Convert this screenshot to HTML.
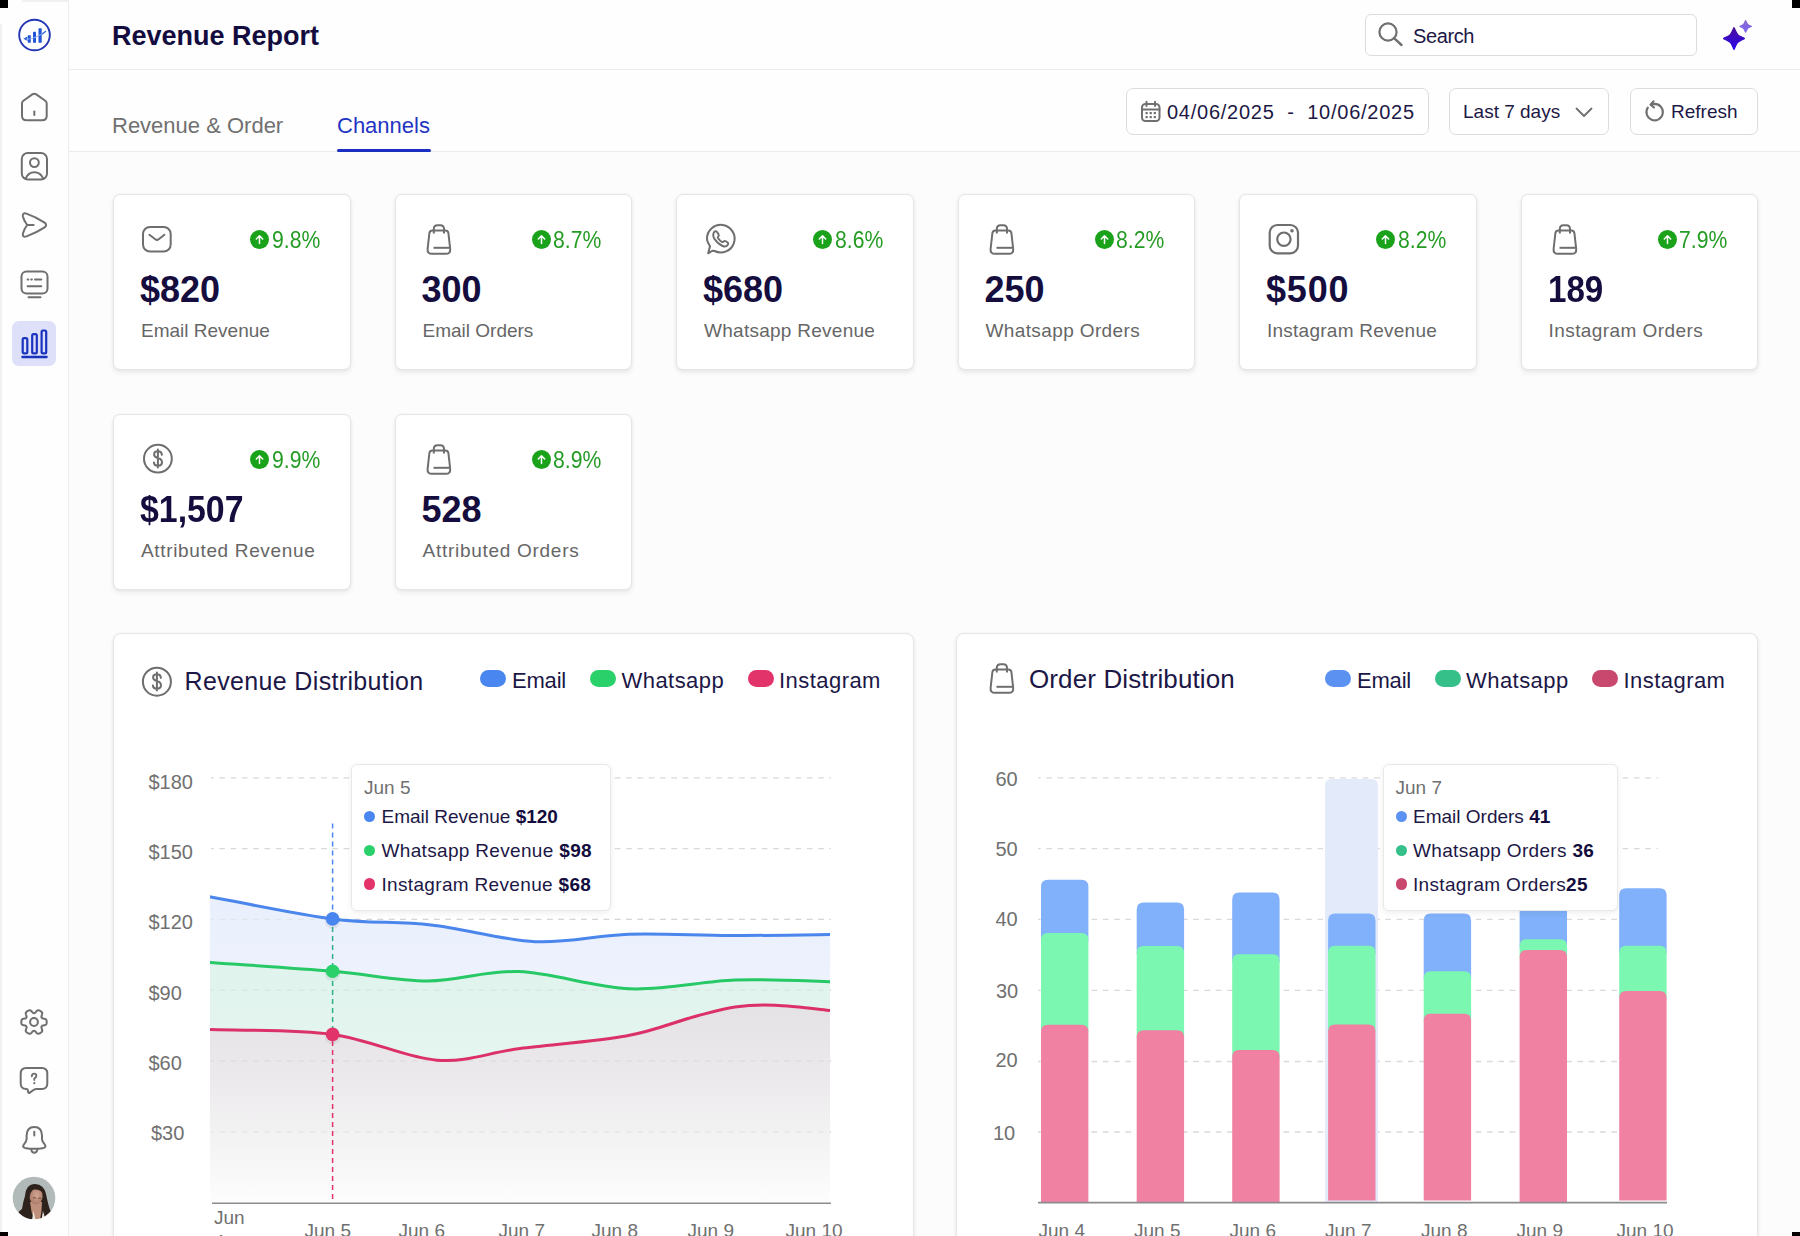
<!DOCTYPE html>
<html><head><meta charset="utf-8">
<style>
*{box-sizing:border-box;margin:0;padding:0}
html,body{width:1800px;height:1236px;overflow:hidden;background:#fcfcfc;font-family:"Liberation Sans",sans-serif;color:#15103f}
.abs{position:absolute}
.t{position:absolute;white-space:nowrap;line-height:1}
#side{position:absolute;left:0;top:0;width:69px;height:1236px;background:#fefefe;border-right:1px solid #ededed}
#head{position:absolute;left:69px;top:0;width:1731px;height:70px;background:#fefefe;border-bottom:1px solid #ebebeb}
#tabs{position:absolute;left:69px;top:70px;width:1731px;height:82px;background:#fefefe;border-bottom:1px solid #ebebeb}
.btn{position:absolute;border:1px solid #dcdcdc;border-radius:7px;background:#fff}
.card{position:absolute;background:#fff;border:1px solid #e6e6e6;border-radius:7px;box-shadow:0 0 3px rgba(0,0,0,0.05),0 3px 5px rgba(0,0,0,0.07)}
.corner{position:absolute;background:#000;width:8px}
.ico{position:absolute;overflow:visible}
.kv{font-size:36px;font-weight:700;color:#140d3e}
.kl{font-size:19px;color:#666}
.kp{font-size:23.5px;transform:scaleX(0.9);transform-origin:0 0;color:#249c24}
.badge{position:absolute;width:19px;height:19px;border-radius:50%;background:#1aa31a}
</style></head>
<body>
<div id="side"></div>
<div id="head"></div>
<div id="tabs"></div>



<!-- sidebar -->
<div class="abs" style="left:0;top:24px;width:1.5px;height:1212px;background:#f1f1f1"></div>
<div class="abs" style="left:22px;top:0;width:47px;height:1.5px;background:#f1f1f1"></div>
<svg class="ico" style="left:18px;top:18px" width="34" height="34" viewBox="0 0 34 34">
 <circle cx="16.5" cy="17" r="15.3" fill="#fff" stroke="#2336b4" stroke-width="1.9"/>
 <g fill="#1f55d6"><rect x="9.8" y="17.2" width="3" height="7.6" rx="0.5"/><rect x="15" y="13.8" width="3" height="11" rx="0.5"/><rect x="20.5" y="10.3" width="3.2" height="14.5" rx="0.5"/></g>
 <path d="M5.3 20.8 L9.6 18.6 L9.2 21 L9.8 23 Z" fill="#2a5ed8"/>
 <path d="M9 21.2 Q17 21 27.6 13.4" fill="none" stroke="#8fb2f2" stroke-width="1.1" stroke-linecap="round"/>
 <path d="M23.9 16.2 L27.6 13.4" fill="none" stroke="#3a6ad8" stroke-width="1.2" stroke-linecap="round"/>
</svg>
<svg class="ico" style="left:20px;top:92px" width="29" height="30" viewBox="0 0 29 30">
 <path d="M2 11.5 Q2 9.8 3.4 8.8 L12.3 2.4 Q14.3 1 16.3 2.4 L25.3 8.8 Q26.7 9.8 26.7 11.5 V23.7 Q26.7 28.3 22.1 28.3 H6.6 Q2 28.3 2 23.7Z" fill="none" stroke="#6f6f6f" stroke-width="2" stroke-linejoin="round"/>
 <path d="M14.3 19.5 V23" stroke="#6f6f6f" stroke-width="2" stroke-linecap="round"/>
</svg>
<svg class="ico" style="left:20px;top:151px" width="29" height="30" viewBox="0 0 29 30">
 <rect x="1.8" y="2" width="25.2" height="26.5" rx="6" fill="none" stroke="#6f6f6f" stroke-width="2"/>
 <circle cx="14.4" cy="11.6" r="4.4" fill="none" stroke="#6f6f6f" stroke-width="2"/>
 <path d="M5.6 27.6 Q8.2 21.2 14.4 21.2 Q20.6 21.2 23.2 27.6" fill="none" stroke="#6f6f6f" stroke-width="2"/>
</svg>
<svg class="ico" style="left:20px;top:211px" width="29" height="29" viewBox="0 0 29 29">
 <path d="M6.5 2.6 Q2.2 1.4 2.9 5.4 Q4 10 7.2 14 Q4 18 2.9 22.6 Q2.2 26.6 6.5 25.4 Q16 22 24.6 16.4 Q27.6 14 24.6 11.6 Q16 6 6.5 2.6Z" fill="none" stroke="#6f6f6f" stroke-width="2" stroke-linejoin="round"/>
 <path d="M7.4 14 H13.6" stroke="#6f6f6f" stroke-width="2" stroke-linecap="round"/>
</svg>
<svg class="ico" style="left:19px;top:269px" width="31" height="31" viewBox="0 0 31 31">
 <rect x="2.5" y="2.6" width="26" height="21.8" rx="5" fill="none" stroke="#6f6f6f" stroke-width="2"/>
 <path d="M8.6 10.5 H9.3 M12.2 10.5 H12.9 M16 10.5 H22.3 M8.6 17.2 H22.3 M9.5 28.3 H21.5" stroke="#6f6f6f" stroke-width="2" stroke-linecap="round"/>
</svg>
<div class="abs" style="left:12px;top:321px;width:44px;height:45px;border-radius:7px;background:#dde0f8"></div>
<svg class="ico" style="left:20px;top:328px" width="29" height="31" viewBox="0 0 29 31">
 <rect x="2.7" y="10.2" width="4.6" height="15.2" rx="1.4" fill="none" stroke="#1a33bf" stroke-width="2.2"/>
 <rect x="12.2" y="6.2" width="4.6" height="19.2" rx="1.4" fill="none" stroke="#1a33bf" stroke-width="2.2"/>
 <rect x="21.6" y="2.5" width="4.6" height="22.9" rx="1.4" fill="none" stroke="#1a33bf" stroke-width="2.2"/>
 <path d="M2.5 29 H26.5" stroke="#1a33bf" stroke-width="2.5" stroke-linecap="round"/>
</svg>
<svg class="ico" style="left:19.2px;top:1006.9px" width="30" height="30" viewBox="0 0 30 30">
 <path d="M27.70 15.00 L27.70 15.22 L27.69 15.44 L27.67 15.66 L27.65 15.88 L27.62 16.10 L27.58 16.32 L27.53 16.54 L27.47 16.75 L27.39 16.96 L27.29 17.17 L27.17 17.37 L27.01 17.55 L26.81 17.73 L26.56 17.88 L26.27 18.02 L25.92 18.13 L25.55 18.22 L25.16 18.30 L24.77 18.36 L24.40 18.42 L24.08 18.48 L23.79 18.55 L23.55 18.63 L23.35 18.72 L23.18 18.81 L23.03 18.92 L22.91 19.03 L22.80 19.15 L22.70 19.27 L22.62 19.40 L22.55 19.54 L22.49 19.68 L22.44 19.83 L22.41 20.00 L22.39 20.17 L22.39 20.37 L22.42 20.59 L22.47 20.84 L22.56 21.12 L22.67 21.43 L22.80 21.78 L22.94 22.14 L23.07 22.52 L23.17 22.89 L23.25 23.25 L23.28 23.57 L23.26 23.86 L23.21 24.12 L23.13 24.35 L23.02 24.56 L22.90 24.75 L22.75 24.92 L22.60 25.08 L22.44 25.24 L22.27 25.38 L22.09 25.51 L21.91 25.64 L21.73 25.77 L21.54 25.89 L21.35 26.00 L21.16 26.11 L20.96 26.21 L20.76 26.31 L20.56 26.40 L20.35 26.48 L20.15 26.56 L19.93 26.62 L19.72 26.68 L19.50 26.71 L19.27 26.73 L19.04 26.72 L18.79 26.68 L18.54 26.59 L18.28 26.45 L18.02 26.27 L17.75 26.03 L17.48 25.75 L17.22 25.44 L16.97 25.14 L16.74 24.86 L16.52 24.60 L16.32 24.39 L16.13 24.22 L15.96 24.09 L15.79 23.99 L15.62 23.91 L15.46 23.86 L15.31 23.83 L15.15 23.81 L15.00 23.80 L14.85 23.81 L14.69 23.83 L14.54 23.86 L14.38 23.91 L14.21 23.99 L14.04 24.09 L13.87 24.22 L13.68 24.39 L13.48 24.60 L13.26 24.86 L13.03 25.14 L12.78 25.44 L12.52 25.75 L12.25 26.03 L11.98 26.27 L11.72 26.45 L11.46 26.59 L11.21 26.68 L10.96 26.72 L10.73 26.73 L10.50 26.71 L10.28 26.68 L10.07 26.62 L9.85 26.56 L9.65 26.48 L9.44 26.40 L9.24 26.31 L9.04 26.21 L8.84 26.11 L8.65 26.00 L8.46 25.89 L8.27 25.77 L8.09 25.64 L7.91 25.51 L7.73 25.38 L7.56 25.24 L7.40 25.08 L7.25 24.92 L7.10 24.75 L6.98 24.56 L6.87 24.35 L6.79 24.12 L6.74 23.86 L6.72 23.57 L6.75 23.25 L6.83 22.89 L6.93 22.52 L7.06 22.14 L7.20 21.78 L7.33 21.43 L7.44 21.12 L7.53 20.84 L7.58 20.59 L7.61 20.37 L7.61 20.17 L7.59 20.00 L7.56 19.83 L7.51 19.68 L7.45 19.54 L7.38 19.40 L7.30 19.27 L7.20 19.15 L7.09 19.03 L6.97 18.92 L6.82 18.81 L6.65 18.72 L6.45 18.63 L6.21 18.55 L5.92 18.48 L5.60 18.42 L5.23 18.36 L4.84 18.30 L4.45 18.22 L4.08 18.13 L3.73 18.02 L3.44 17.88 L3.19 17.73 L2.99 17.55 L2.83 17.37 L2.71 17.17 L2.61 16.96 L2.53 16.75 L2.47 16.54 L2.42 16.32 L2.38 16.10 L2.35 15.88 L2.33 15.66 L2.31 15.44 L2.30 15.22 L2.30 15.00 L2.30 14.78 L2.31 14.56 L2.33 14.34 L2.35 14.12 L2.38 13.90 L2.42 13.68 L2.47 13.46 L2.53 13.25 L2.61 13.04 L2.71 12.83 L2.83 12.63 L2.99 12.45 L3.19 12.27 L3.44 12.12 L3.73 11.98 L4.08 11.87 L4.45 11.78 L4.84 11.70 L5.23 11.64 L5.60 11.58 L5.92 11.52 L6.21 11.45 L6.45 11.37 L6.65 11.28 L6.82 11.19 L6.97 11.08 L7.09 10.97 L7.20 10.85 L7.30 10.73 L7.38 10.60 L7.45 10.46 L7.51 10.32 L7.56 10.17 L7.59 10.00 L7.61 9.83 L7.61 9.63 L7.58 9.41 L7.53 9.16 L7.44 8.88 L7.33 8.57 L7.20 8.22 L7.06 7.86 L6.93 7.48 L6.83 7.11 L6.75 6.75 L6.72 6.43 L6.74 6.14 L6.79 5.88 L6.87 5.65 L6.98 5.44 L7.10 5.25 L7.25 5.08 L7.40 4.92 L7.56 4.76 L7.73 4.62 L7.91 4.49 L8.09 4.36 L8.27 4.23 L8.46 4.11 L8.65 4.00 L8.84 3.89 L9.04 3.79 L9.24 3.69 L9.44 3.60 L9.65 3.52 L9.85 3.44 L10.07 3.38 L10.28 3.32 L10.50 3.29 L10.73 3.27 L10.96 3.28 L11.21 3.32 L11.46 3.41 L11.72 3.55 L11.98 3.73 L12.25 3.97 L12.52 4.25 L12.78 4.56 L13.03 4.86 L13.26 5.14 L13.48 5.40 L13.68 5.61 L13.87 5.78 L14.04 5.91 L14.21 6.01 L14.38 6.09 L14.54 6.14 L14.69 6.17 L14.85 6.19 L15.00 6.20 L15.15 6.19 L15.31 6.17 L15.46 6.14 L15.62 6.09 L15.79 6.01 L15.96 5.91 L16.13 5.78 L16.32 5.61 L16.52 5.40 L16.74 5.14 L16.97 4.86 L17.22 4.56 L17.48 4.25 L17.75 3.97 L18.02 3.73 L18.28 3.55 L18.54 3.41 L18.79 3.32 L19.04 3.28 L19.27 3.27 L19.50 3.29 L19.72 3.32 L19.93 3.38 L20.15 3.44 L20.35 3.52 L20.56 3.60 L20.76 3.69 L20.96 3.79 L21.16 3.89 L21.35 4.00 L21.54 4.11 L21.73 4.23 L21.91 4.36 L22.09 4.49 L22.27 4.62 L22.44 4.76 L22.60 4.92 L22.75 5.08 L22.90 5.25 L23.02 5.44 L23.13 5.65 L23.21 5.88 L23.26 6.14 L23.28 6.43 L23.25 6.75 L23.17 7.11 L23.07 7.48 L22.94 7.86 L22.80 8.22 L22.67 8.57 L22.56 8.88 L22.47 9.16 L22.42 9.41 L22.39 9.63 L22.39 9.83 L22.41 10.00 L22.44 10.17 L22.49 10.32 L22.55 10.46 L22.62 10.60 L22.70 10.73 L22.80 10.85 L22.91 10.97 L23.03 11.08 L23.18 11.19 L23.35 11.28 L23.55 11.37 L23.79 11.45 L24.08 11.52 L24.40 11.58 L24.77 11.64 L25.16 11.70 L25.55 11.78 L25.92 11.87 L26.27 11.98 L26.56 12.12 L26.81 12.27 L27.01 12.45 L27.17 12.63 L27.29 12.83 L27.39 13.04 L27.47 13.25 L27.53 13.46 L27.58 13.68 L27.62 13.90 L27.65 14.12 L27.67 14.34 L27.69 14.56 L27.70 14.78Z" fill="none" stroke="#6f6f6f" stroke-width="2" stroke-linejoin="round"/>
 <circle cx="15" cy="15" r="3.9" fill="none" stroke="#6f6f6f" stroke-width="2"/>
</svg>
<svg class="ico" style="left:19px;top:1066px" width="30" height="30" viewBox="0 0 30 30">
 <path d="M7.2 2 H22.8 Q28.3 2 28.3 7.5 V17.6 Q28.3 23.1 22.8 23.1 H17.4 Q16 23.1 14.8 23.8 L10.8 26.6 Q9.3 27.6 9.1 25.8 L9 24.6 Q8.8 23.1 7.2 23.1 Q1.7 23.1 1.7 17.6 V7.5 Q1.7 2 7.2 2Z" fill="none" stroke="#6f6f6f" stroke-width="2" stroke-linejoin="round"/>
 <path d="M12.8 10.2 Q12.9 7.6 15.1 7.6 Q17.4 7.6 17.4 9.8 Q17.4 11.3 15.3 12.6 V13.9" fill="none" stroke="#6f6f6f" stroke-width="1.9" stroke-linecap="round"/>
 <circle cx="15.3" cy="17.2" r="1.1" fill="#6f6f6f"/>
</svg>
<svg class="ico" style="left:21px;top:1125px" width="27" height="30" viewBox="0 0 27 30">
 <path d="M13.3 1.9 Q20.9 1.9 21 10.5 V14.2 Q21.2 16.6 23.3 18.9 Q25.9 21.9 22.8 22.9 Q13.3 24.8 3.8 22.9 Q0.7 21.9 3.3 18.9 Q5.4 16.6 5.6 14.2 V10.5 Q5.7 1.9 13.3 1.9Z" fill="none" stroke="#6f6f6f" stroke-width="2" stroke-linejoin="round"/>
 <path d="M10.2 24 Q10.5 27.8 13.3 27.8 Q16.1 27.8 16.4 24" fill="none" stroke="#6f6f6f" stroke-width="2"/>
 <path d="M13.3 6.8 V10.6" stroke="#6f6f6f" stroke-width="2" stroke-linecap="round"/>
</svg>
<svg class="ico" style="left:12px;top:1176px" width="44" height="44" viewBox="0 0 44 44">
 <defs><clipPath id="avc"><circle cx="22" cy="22" r="21.3"/></clipPath>
 <radialGradient id="skin" cx="0.55" cy="0.45" r="0.6"><stop offset="0" stop-color="#d2a592"/><stop offset="1" stop-color="#a87866"/></radialGradient>
 <filter id="avb"><feGaussianBlur stdDeviation="0.45"/></filter></defs>
 <g clip-path="url(#avc)" filter="url(#avb)">
  <rect width="44" height="44" fill="#b1b9b9"/>
  <path d="M4 44 Q5 36 10 33 Q11 26 13 20 Q14 8 23 8 Q32 8.5 34 18 Q36 28 38 34 Q42 38 40 44Z" fill="#2e211c"/>
  <path d="M18 26 Q19 36 22 44 H28 Q30 34 30 26Z" fill="#bf907c"/>
  <ellipse cx="24" cy="20" rx="6.6" ry="8.6" fill="url(#skin)"/>
  <path d="M16 19 Q16 10 23.5 10 Q31 10.5 31 17 Q28 13 22 13.5 Q18 15 17.5 22Z" fill="#2e211c"/>
  <path d="M20 44 L21.6 35 L23.5 44Z M29.5 44 L31 35 L33.5 44Z" fill="#ece8e4"/>
  <path d="M21 22 Q23 21 24 22.5 M26 22.5 Q28 21.5 29 22.6" stroke="#5a3a30" stroke-width="0.8" fill="none"/>
 </g>
</svg>


<!-- kpi cards -->
<div class="card" style="left:113.0px;top:194.3px;width:237.5px;height:176px">
 <svg class="ico" style="left:26px;top:29px" width="34" height="30" viewBox="0 0 34 30"><rect x="3" y="3" width="27.7" height="24.6" rx="7" fill="none" stroke="#6e6e6e" stroke-width="2"/><path d="M9.4 10.8 L15.3 15.2 Q17 16.5 18.7 15.2 L24.4 10.8" fill="none" stroke="#6e6e6e" stroke-width="2" stroke-linecap="round"/></svg>
 <div class="badge" style="left:136px;top:35.2px"><svg class="ico" style="left:4px;top:4px" width="11" height="11" viewBox="0 0 11 11"><path d="M5.5 9.5 V2 M2.3 5 L5.5 1.8 L8.7 5" fill="none" stroke="#fff" stroke-width="1.5" stroke-linecap="round" stroke-linejoin="round"/></svg></div>
 <div class="t kp" style="left:157.5px;top:34px">9.8%</div>
 <div class="t kv" style="left:26px;top:77px">$820</div>
 <div class="t kl" style="left:27px;top:125.7px">Email Revenue</div>
</div>
<div class="card" style="left:394.5px;top:194.3px;width:237.5px;height:176px">
 <svg class="ico" style="left:28px;top:27.5px" width="30" height="33" viewBox="0 0 30 33"><path d="M8.3 7.6 Q6 7.6 5.4 10 L3.6 26 Q3.2 30.8 8 30.8 H21.8 Q26.6 30.8 26.2 26 L24.4 10 Q23.8 7.6 21.5 7.6Z" fill="none" stroke="#6e6e6e" stroke-width="2" stroke-linejoin="round"/><path d="M9.8 10.6 V6 Q9.8 2.3 13.5 2.3 H16.3 Q20 2.3 20 6 V10.6" fill="none" stroke="#6e6e6e" stroke-width="2"/><path d="M9.5 24.8 H25.2" stroke="#6e6e6e" stroke-width="2"/></svg>
 <div class="badge" style="left:136px;top:35.2px"><svg class="ico" style="left:4px;top:4px" width="11" height="11" viewBox="0 0 11 11"><path d="M5.5 9.5 V2 M2.3 5 L5.5 1.8 L8.7 5" fill="none" stroke="#fff" stroke-width="1.5" stroke-linecap="round" stroke-linejoin="round"/></svg></div>
 <div class="t kp" style="left:157.5px;top:34px">8.7%</div>
 <div class="t kv" style="left:26px;top:77px">300</div>
 <div class="t kl" style="left:27px;top:125.7px">Email Orders</div>
</div>
<div class="card" style="left:676.0px;top:194.3px;width:237.5px;height:176px">
 <svg class="ico" style="left:25.5px;top:27px" width="34" height="34" viewBox="0 0 34 34"><path d="M5.2 31.3 L7 24.2 Q4 19.5 4 16.8 A13.8 13.8 0 1 1 11.6 29 Q10.2 28.4 9 29 Z" fill="none" stroke="#6e6e6e" stroke-width="2" stroke-linejoin="round"/><path d="M11.4 9.6 Q13 8.6 14 10 L15.6 12.4 Q16.3 13.6 15.2 14.5 Q14.3 15.2 15.2 16.4 Q17 18.8 18.6 19.8 Q19.6 20.5 20.4 19.6 Q21.5 18.4 22.8 19.3 L24.6 20.6 Q25.8 21.6 24.6 23.2 Q22.8 25.3 19.6 24 Q14.5 21.8 11.2 16.6 Q9.2 12.4 11.4 9.6Z" fill="none" stroke="#6e6e6e" stroke-width="1.9" stroke-linejoin="round"/></svg>
 <div class="badge" style="left:136px;top:35.2px"><svg class="ico" style="left:4px;top:4px" width="11" height="11" viewBox="0 0 11 11"><path d="M5.5 9.5 V2 M2.3 5 L5.5 1.8 L8.7 5" fill="none" stroke="#fff" stroke-width="1.5" stroke-linecap="round" stroke-linejoin="round"/></svg></div>
 <div class="t kp" style="left:157.5px;top:34px">8.6%</div>
 <div class="t kv" style="left:26px;top:77px">$680</div>
 <div class="t kl" style="left:27px;top:125.7px;letter-spacing:0.27px">Whatsapp Revenue</div>
</div>
<div class="card" style="left:957.5px;top:194.3px;width:237.5px;height:176px">
 <svg class="ico" style="left:28px;top:27.5px" width="30" height="33" viewBox="0 0 30 33"><path d="M8.3 7.6 Q6 7.6 5.4 10 L3.6 26 Q3.2 30.8 8 30.8 H21.8 Q26.6 30.8 26.2 26 L24.4 10 Q23.8 7.6 21.5 7.6Z" fill="none" stroke="#6e6e6e" stroke-width="2" stroke-linejoin="round"/><path d="M9.8 10.6 V6 Q9.8 2.3 13.5 2.3 H16.3 Q20 2.3 20 6 V10.6" fill="none" stroke="#6e6e6e" stroke-width="2"/><path d="M9.5 24.8 H25.2" stroke="#6e6e6e" stroke-width="2"/></svg>
 <div class="badge" style="left:136px;top:35.2px"><svg class="ico" style="left:4px;top:4px" width="11" height="11" viewBox="0 0 11 11"><path d="M5.5 9.5 V2 M2.3 5 L5.5 1.8 L8.7 5" fill="none" stroke="#fff" stroke-width="1.5" stroke-linecap="round" stroke-linejoin="round"/></svg></div>
 <div class="t kp" style="left:157.5px;top:34px">8.2%</div>
 <div class="t kv" style="left:26px;top:77px">250</div>
 <div class="t kl" style="left:27px;top:125.7px;letter-spacing:0.38px">Whatsapp Orders</div>
</div>
<div class="card" style="left:1239.0px;top:194.3px;width:237.5px;height:176px">
 <svg class="ico" style="left:27px;top:27px" width="34" height="34" viewBox="0 0 34 34"><rect x="2.7" y="3" width="28.3" height="28.3" rx="7.6" fill="none" stroke="#6e6e6e" stroke-width="2.2"/><circle cx="16.9" cy="17.2" r="6.7" fill="none" stroke="#6e6e6e" stroke-width="2.2"/><circle cx="25" cy="8.8" r="1.8" fill="#6e6e6e"/></svg>
 <div class="badge" style="left:136px;top:35.2px"><svg class="ico" style="left:4px;top:4px" width="11" height="11" viewBox="0 0 11 11"><path d="M5.5 9.5 V2 M2.3 5 L5.5 1.8 L8.7 5" fill="none" stroke="#fff" stroke-width="1.5" stroke-linecap="round" stroke-linejoin="round"/></svg></div>
 <div class="t kp" style="left:157.5px;top:34px">8.2%</div>
 <div class="t kv" style="left:26px;top:77px;letter-spacing:0.8px">$500</div>
 <div class="t kl" style="left:27px;top:125.7px;letter-spacing:0.25px">Instagram Revenue</div>
</div>
<div class="card" style="left:1520.5px;top:194.3px;width:237.5px;height:176px">
 <svg class="ico" style="left:28px;top:27.5px" width="30" height="33" viewBox="0 0 30 33"><path d="M8.3 7.6 Q6 7.6 5.4 10 L3.6 26 Q3.2 30.8 8 30.8 H21.8 Q26.6 30.8 26.2 26 L24.4 10 Q23.8 7.6 21.5 7.6Z" fill="none" stroke="#6e6e6e" stroke-width="2" stroke-linejoin="round"/><path d="M9.8 10.6 V6 Q9.8 2.3 13.5 2.3 H16.3 Q20 2.3 20 6 V10.6" fill="none" stroke="#6e6e6e" stroke-width="2"/><path d="M9.5 24.8 H25.2" stroke="#6e6e6e" stroke-width="2"/></svg>
 <div class="badge" style="left:136px;top:35.2px"><svg class="ico" style="left:4px;top:4px" width="11" height="11" viewBox="0 0 11 11"><path d="M5.5 9.5 V2 M2.3 5 L5.5 1.8 L8.7 5" fill="none" stroke="#fff" stroke-width="1.5" stroke-linecap="round" stroke-linejoin="round"/></svg></div>
 <div class="t kp" style="left:157.5px;top:34px">7.9%</div>
 <div class="t kv" style="left:26px;top:77px;transform:scaleX(0.92);transform-origin:0 0">189</div>
 <div class="t kl" style="left:27px;top:125.7px;letter-spacing:0.43px">Instagram Orders</div>
</div>
<div class="card" style="left:113.0px;top:414.3px;width:237.5px;height:176px">
 <svg class="ico" style="left:27px;top:27px" width="34" height="34" viewBox="0 0 34 34"><circle cx="16.9" cy="16.7" r="13.9" fill="none" stroke="#6e6e6e" stroke-width="2"/><path d="M20.9 12.8 Q20.6 9.3 16.9 9.3 Q13.1 9.3 13.1 12.4 Q13.1 15 16.9 16 Q21 17 21 20.3 Q21 23.7 16.9 23.7 Q13 23.7 12.9 20.4 M16.9 7.5 V25.6" fill="none" stroke="#6e6e6e" stroke-width="2" stroke-linecap="round"/></svg>
 <div class="badge" style="left:136px;top:35.2px"><svg class="ico" style="left:4px;top:4px" width="11" height="11" viewBox="0 0 11 11"><path d="M5.5 9.5 V2 M2.3 5 L5.5 1.8 L8.7 5" fill="none" stroke="#fff" stroke-width="1.5" stroke-linecap="round" stroke-linejoin="round"/></svg></div>
 <div class="t kp" style="left:157.5px;top:34px">9.9%</div>
 <div class="t kv" style="left:26px;top:77px;transform:scaleX(0.94);transform-origin:0 0">$1,507</div>
 <div class="t kl" style="left:27px;top:125.7px;letter-spacing:0.65px">Attributed Revenue</div>
</div>
<div class="card" style="left:394.5px;top:414.3px;width:237.5px;height:176px">
 <svg class="ico" style="left:28px;top:27.5px" width="30" height="33" viewBox="0 0 30 33"><path d="M8.3 7.6 Q6 7.6 5.4 10 L3.6 26 Q3.2 30.8 8 30.8 H21.8 Q26.6 30.8 26.2 26 L24.4 10 Q23.8 7.6 21.5 7.6Z" fill="none" stroke="#6e6e6e" stroke-width="2" stroke-linejoin="round"/><path d="M9.8 10.6 V6 Q9.8 2.3 13.5 2.3 H16.3 Q20 2.3 20 6 V10.6" fill="none" stroke="#6e6e6e" stroke-width="2"/><path d="M9.5 24.8 H25.2" stroke="#6e6e6e" stroke-width="2"/></svg>
 <div class="badge" style="left:136px;top:35.2px"><svg class="ico" style="left:4px;top:4px" width="11" height="11" viewBox="0 0 11 11"><path d="M5.5 9.5 V2 M2.3 5 L5.5 1.8 L8.7 5" fill="none" stroke="#fff" stroke-width="1.5" stroke-linecap="round" stroke-linejoin="round"/></svg></div>
 <div class="t kp" style="left:157.5px;top:34px">8.9%</div>
 <div class="t kv" style="left:26px;top:77px">528</div>
 <div class="t kl" style="left:27px;top:125.7px;letter-spacing:0.72px">Attributed Orders</div>
</div>

<!-- charts -->
<!-- revenue -->
<div class="card" style="left:113px;top:633.3px;width:801px;height:640px;border-radius:8px"></div>
<svg class="ico" style="left:140px;top:664.5px" width="34" height="34" viewBox="0 0 34 34"><circle cx="16.9" cy="16.7" r="14" fill="none" stroke="#6e6e6e" stroke-width="2"/><path d="M20.9 12.8 Q20.6 9.3 16.9 9.3 Q13.1 9.3 13.1 12.4 Q13.1 15 16.9 16 Q21 17 21 20.3 Q21 23.7 16.9 23.7 Q13 23.7 12.9 20.4 M16.9 7.5 V25.6" fill="none" stroke="#6e6e6e" stroke-width="2" stroke-linecap="round"/></svg>
<div class="t" style="left:184.5px;top:668.5px;font-size:25px;color:#1c1746;font-weight:400;letter-spacing:0.35px">Revenue Distribution</div>
<div class="abs" style="left:480px;top:670px;width:26px;height:17px;border-radius:8.5px;background:#4a86ef"></div>
<div class="t" style="left:512px;top:669.5px;font-size:22px;color:#1c1746;font-weight:400;letter-spacing:-0.2px">Email</div>
<div class="abs" style="left:590px;top:670px;width:26px;height:17px;border-radius:8.5px;background:#2ad06a"></div>
<div class="t" style="left:621.5px;top:669.5px;font-size:22px;color:#1c1746;font-weight:400;letter-spacing:0.45px">Whatsapp</div>
<div class="abs" style="left:747.5px;top:670px;width:26px;height:17px;border-radius:8.5px;background:#e3336b"></div>
<div class="t" style="left:779px;top:669.5px;font-size:22px;color:#1c1746;font-weight:400;letter-spacing:0.45px">Instagram</div>
<svg class="abs" style="left:0;top:0" width="1800" height="1236" viewBox="0 0 1800 1236">
<defs>
<linearGradient id="gb" x1="0" y1="896" x2="0" y2="1203" gradientUnits="userSpaceOnUse"><stop offset="0" stop-color="#e9effc"/><stop offset="0.3" stop-color="#edf2fd"/><stop offset="1" stop-color="#fbfcff"/></linearGradient>
<linearGradient id="gg" x1="0" y1="962" x2="0" y2="1203" gradientUnits="userSpaceOnUse"><stop offset="0" stop-color="#e0f3ed"/><stop offset="0.4" stop-color="#e5f5f0"/><stop offset="1" stop-color="#fafdfc"/></linearGradient>
<linearGradient id="gp" x1="0" y1="1005" x2="0" y2="1203" gradientUnits="userSpaceOnUse"><stop offset="0" stop-color="#e5e2e5"/><stop offset="0.35" stop-color="#ebe9eb"/><stop offset="0.75" stop-color="#f6f5f6"/><stop offset="1" stop-color="#fdfdfd"/></linearGradient>
</defs>
<line x1="211" y1="777.8" x2="831" y2="777.8" stroke="#d9d9d9" stroke-width="1.3" stroke-dasharray="5.7 5.6" stroke-dashoffset="3"/>
<line x1="211" y1="848.6" x2="831" y2="848.6" stroke="#d9d9d9" stroke-width="1.3" stroke-dasharray="5.7 5.6" stroke-dashoffset="3"/>
<line x1="211" y1="919.4" x2="831" y2="919.4" stroke="#d9d9d9" stroke-width="1.3" stroke-dasharray="5.7 5.6" stroke-dashoffset="3"/>
<line x1="211" y1="990.2" x2="831" y2="990.2" stroke="#d9d9d9" stroke-width="1.3" stroke-dasharray="5.7 5.6" stroke-dashoffset="3"/>
<line x1="211" y1="1061" x2="831" y2="1061" stroke="#d9d9d9" stroke-width="1.3" stroke-dasharray="5.7 5.6" stroke-dashoffset="3"/>
<line x1="211" y1="1131.8" x2="831" y2="1131.8" stroke="#d9d9d9" stroke-width="1.3" stroke-dasharray="5.7 5.6" stroke-dashoffset="3"/>
<path d="M210.0 896.7 C230.4 900.4 295.8 914.2 332.6 918.9 C369.4 923.6 397.2 921.2 431.0 925.0 C464.8 928.8 502.5 940.2 535.5 941.7 C568.5 943.2 596.5 935.2 628.9 934.2 C661.3 933.2 696.5 935.4 730.0 935.5 C763.5 935.6 813.3 934.8 830.0 934.6 L830 1203 L210 1203 Z" fill="url(#gb)"/>
<path d="M210.0 962.4 C230.4 963.9 296.3 968.2 332.6 971.3 C368.9 974.4 396.9 981.0 428.0 981.0 C459.1 981.0 485.3 970.3 519.0 971.6 C552.7 972.9 594.0 987.4 630.0 988.8 C666.0 990.2 701.7 981.2 735.0 980.0 C768.3 978.8 814.2 981.4 830.0 981.7 L830 1203 L210 1203 Z" fill="url(#gg)"/>
<path d="M210.0 1029.6 C230.4 1030.4 294.8 1029.3 332.6 1034.4 C370.4 1039.5 405.8 1057.9 437.0 1060.2 C468.2 1062.5 488.5 1052.5 520.0 1048.5 C551.5 1044.5 597.0 1041.3 626.0 1036.0 C655.0 1030.7 675.8 1021.5 694.0 1016.7 C712.2 1011.9 721.5 1008.9 735.0 1007.0 C748.5 1005.1 759.2 1004.7 775.0 1005.3 C790.8 1005.9 820.8 1009.5 830.0 1010.4 L830 1203 L210 1203 Z" fill="url(#gp)"/>
<line x1="211" y1="919.4" x2="831" y2="919.4" stroke="#cfcfcf" stroke-opacity="0.38" stroke-width="1.3" stroke-dasharray="5.7 5.6" stroke-dashoffset="3"/>
<line x1="211" y1="990.2" x2="831" y2="990.2" stroke="#cfcfcf" stroke-opacity="0.38" stroke-width="1.3" stroke-dasharray="5.7 5.6" stroke-dashoffset="3"/>
<line x1="211" y1="1061" x2="831" y2="1061" stroke="#cfcfcf" stroke-opacity="0.38" stroke-width="1.3" stroke-dasharray="5.7 5.6" stroke-dashoffset="3"/>
<line x1="211" y1="1131.8" x2="831" y2="1131.8" stroke="#cfcfcf" stroke-opacity="0.38" stroke-width="1.3" stroke-dasharray="5.7 5.6" stroke-dashoffset="3"/>
<line x1="212" y1="1203.2" x2="831" y2="1203.2" stroke="#8c8c8c" stroke-width="1.6"/>
<line x1="332.6" y1="823.5" x2="332.6" y2="919" stroke="#4a86ef" stroke-width="1.5" stroke-dasharray="5 4"/>
<line x1="332.6" y1="919" x2="332.6" y2="1034" stroke="#2fae8a" stroke-width="1.5" stroke-dasharray="5 4" stroke-dashoffset="1"/>
<line x1="332.6" y1="1034" x2="332.6" y2="1203" stroke="#e3336b" stroke-width="1.5" stroke-dasharray="5 4" stroke-dashoffset="2"/>
<path d="M210.0 896.7 C230.4 900.4 295.8 914.2 332.6 918.9 C369.4 923.6 397.2 921.2 431.0 925.0 C464.8 928.8 502.5 940.2 535.5 941.7 C568.5 943.2 596.5 935.2 628.9 934.2 C661.3 933.2 696.5 935.4 730.0 935.5 C763.5 935.6 813.3 934.8 830.0 934.6" fill="none" stroke="#4a86ec" stroke-width="3"/>
<path d="M210.0 962.4 C230.4 963.9 296.3 968.2 332.6 971.3 C368.9 974.4 396.9 981.0 428.0 981.0 C459.1 981.0 485.3 970.3 519.0 971.6 C552.7 972.9 594.0 987.4 630.0 988.8 C666.0 990.2 701.7 981.2 735.0 980.0 C768.3 978.8 814.2 981.4 830.0 981.7" fill="none" stroke="#27c866" stroke-width="3"/>
<path d="M210.0 1029.6 C230.4 1030.4 294.8 1029.3 332.6 1034.4 C370.4 1039.5 405.8 1057.9 437.0 1060.2 C468.2 1062.5 488.5 1052.5 520.0 1048.5 C551.5 1044.5 597.0 1041.3 626.0 1036.0 C655.0 1030.7 675.8 1021.5 694.0 1016.7 C712.2 1011.9 721.5 1008.9 735.0 1007.0 C748.5 1005.1 759.2 1004.7 775.0 1005.3 C790.8 1005.9 820.8 1009.5 830.0 1010.4" fill="none" stroke="#dc3168" stroke-width="3"/>
<circle cx="332.6" cy="920.9" r="8" fill="#000" opacity="0.06"/><circle cx="332.6" cy="918.9" r="6.8" fill="#4a86ef"/>
<circle cx="332.6" cy="973.3" r="8" fill="#000" opacity="0.06"/><circle cx="332.6" cy="971.3" r="6.8" fill="#2ad06a"/>
<circle cx="332.6" cy="1036.4" r="8" fill="#000" opacity="0.06"/><circle cx="332.6" cy="1034.4" r="6.8" fill="#e3336b"/>
</svg>
<div class="t" style="left:148.5px;top:771.6px;font-size:20px;color:#707070;font-weight:400;">$180</div>
<div class="t" style="left:148.5px;top:842.3000000000001px;font-size:20px;color:#707070;font-weight:400;">$150</div>
<div class="t" style="left:148.5px;top:911.9px;font-size:20px;color:#707070;font-weight:400;">$120</div>
<div class="t" style="left:148.5px;top:982.5px;font-size:20px;color:#707070;font-weight:400;">$90</div>
<div class="t" style="left:148.5px;top:1052.8999999999999px;font-size:20px;color:#707070;font-weight:400;">$60</div>
<div class="t" style="left:151.0px;top:1122.8999999999999px;font-size:20px;color:#707070;font-weight:400;">$30</div>
<div class="t" style="left:214px;top:1208.4px;font-size:19px;color:#707070;font-weight:400;">Jun</div>
<div class="t" style="left:214px;top:1231.8px;font-size:19px;color:#707070;font-weight:400;">4</div>
<div class="t" style="left:304.5px;top:1220.9px;font-size:19px;color:#707070;font-weight:400;">Jun 5</div>
<div class="t" style="left:398.5px;top:1220.9px;font-size:19px;color:#707070;font-weight:400;">Jun 6</div>
<div class="t" style="left:498.5px;top:1220.9px;font-size:19px;color:#707070;font-weight:400;">Jun 7</div>
<div class="t" style="left:591.5px;top:1220.9px;font-size:19px;color:#707070;font-weight:400;">Jun 8</div>
<div class="t" style="left:687.5px;top:1220.9px;font-size:19px;color:#707070;font-weight:400;">Jun 9</div>
<div class="t" style="left:785.5px;top:1220.9px;font-size:19px;color:#707070;font-weight:400;">Jun 10</div>
<div class="abs" style="left:351px;top:763.5px;width:259.5px;height:147.5px;background:#fff;border:1px solid #e8e8e8;border-radius:6px;box-shadow:0 2px 6px rgba(0,0,0,0.07)"></div>
<div class="t" style="left:364px;top:778.0px;font-size:19px;color:#707070;font-weight:400;">Jun 5</div>
<div class="abs" style="left:364px;top:810.5999999999999px;width:11.4px;height:11.4px;border-radius:50%;background:#4a86ef"></div>
<div class="t" style="left:381.5px;top:806.8px;font-size:19px;color:#1c1746;font-weight:400;">Email Revenue <b style="color:#130d3d">$120</b></div>
<div class="abs" style="left:364px;top:844.4999999999999px;width:11.4px;height:11.4px;border-radius:50%;background:#2ad06a"></div>
<div class="t" style="left:381.5px;top:840.6999999999999px;font-size:19px;color:#1c1746;font-weight:400;letter-spacing:0.33px">Whatsapp Revenue <b style="color:#130d3d">$98</b></div>
<div class="abs" style="left:364px;top:878.3999999999999px;width:11.4px;height:11.4px;border-radius:50%;background:#e3336b"></div>
<div class="t" style="left:381.5px;top:874.5999999999999px;font-size:19px;color:#1c1746;font-weight:400;letter-spacing:0.33px">Instagram Revenue <b style="color:#130d3d">$68</b></div>
<!-- orders -->
<div class="card" style="left:956.3px;top:633.3px;width:802px;height:640px;border-radius:8px"></div>
<svg class="ico" style="left:986.5px;top:661.5px" width="30" height="33" viewBox="0 0 30 33"><path d="M8.3 7.6 Q6 7.6 5.4 10 L3.6 26 Q3.2 30.8 8 30.8 H21.8 Q26.6 30.8 26.2 26 L24.4 10 Q23.8 7.6 21.5 7.6Z" fill="none" stroke="#6e6e6e" stroke-width="2" stroke-linejoin="round"/><path d="M9.8 10.6 V6 Q9.8 2.3 13.5 2.3 H16.3 Q20 2.3 20 6 V10.6" fill="none" stroke="#6e6e6e" stroke-width="2"/><path d="M9.5 24.8 H25.2" stroke="#6e6e6e" stroke-width="2"/></svg>
<div class="t" style="left:1029px;top:665.5px;font-size:26px;color:#1c1746;font-weight:400;letter-spacing:0.12px">Order Distribution</div>
<div class="abs" style="left:1325px;top:670px;width:26px;height:17px;border-radius:8.5px;background:#5b91f0"></div>
<div class="t" style="left:1357px;top:669.5px;font-size:22px;color:#1c1746;font-weight:400;letter-spacing:-0.2px">Email</div>
<div class="abs" style="left:1434.5px;top:670px;width:26px;height:17px;border-radius:8.5px;background:#35c08a"></div>
<div class="t" style="left:1466px;top:669.5px;font-size:22px;color:#1c1746;font-weight:400;letter-spacing:0.45px">Whatsapp</div>
<div class="abs" style="left:1592px;top:670px;width:26px;height:17px;border-radius:8.5px;background:#c9486e"></div>
<div class="t" style="left:1623.5px;top:669.5px;font-size:22px;color:#1c1746;font-weight:400;letter-spacing:0.45px">Instagram</div>
<svg class="abs" style="left:0;top:0" width="1800" height="1236" viewBox="0 0 1800 1236">
<line x1="1038" y1="777.8" x2="1658" y2="777.8" stroke="#d9d9d9" stroke-width="1.3" stroke-dasharray="5.7 5.6" stroke-dashoffset="3"/>
<line x1="1038" y1="848.7" x2="1658" y2="848.7" stroke="#d9d9d9" stroke-width="1.3" stroke-dasharray="5.7 5.6" stroke-dashoffset="3"/>
<line x1="1038" y1="919.4" x2="1658" y2="919.4" stroke="#d9d9d9" stroke-width="1.3" stroke-dasharray="5.7 5.6" stroke-dashoffset="3"/>
<line x1="1038" y1="990.4" x2="1658" y2="990.4" stroke="#d9d9d9" stroke-width="1.3" stroke-dasharray="5.7 5.6" stroke-dashoffset="3"/>
<line x1="1038" y1="1061.5" x2="1658" y2="1061.5" stroke="#d9d9d9" stroke-width="1.3" stroke-dasharray="5.7 5.6" stroke-dashoffset="3"/>
<line x1="1038" y1="1132" x2="1658" y2="1132" stroke="#d9d9d9" stroke-width="1.3" stroke-dasharray="5.7 5.6" stroke-dashoffset="3"/>
<path d="M1325 1202 V785.4 Q1325 778.9 1331.5 778.9 H1371.5 Q1378 778.9 1378 785.4 V1202 Z" fill="#e3ebfb"/>
<path d="M1041 941.1 V886.7 Q1041 879.7 1048 879.7 H1081.4 Q1088.4 879.7 1088.4 886.7 V941.1 Z" fill="#82b1fb"/>
<path d="M1041 1032.7 V940.1 Q1041 933.1 1048 933.1 H1081.4 Q1088.4 933.1 1088.4 940.1 V1032.7 Z" fill="#7bf7b1"/>
<path d="M1041 1202 V1031.7 Q1041 1024.7 1048 1024.7 H1081.4 Q1088.4 1024.7 1088.4 1031.7 V1202 Z" fill="#f081a3"/>
<path d="M1136.7 954.1 V909.4 Q1136.7 902.4 1143.7 902.4 H1177.1000000000001 Q1184.1000000000001 902.4 1184.1000000000001 909.4 V954.1 Z" fill="#82b1fb"/>
<path d="M1136.7 1038.2 V953.1 Q1136.7 946.1 1143.7 946.1 H1177.1000000000001 Q1184.1000000000001 946.1 1184.1000000000001 953.1 V1038.2 Z" fill="#7bf7b1"/>
<path d="M1136.7 1202 V1037.2 Q1136.7 1030.2 1143.7 1030.2 H1177.1000000000001 Q1184.1000000000001 1030.2 1184.1000000000001 1037.2 V1202 Z" fill="#f081a3"/>
<path d="M1232.2 962.2 V899.4 Q1232.2 892.4 1239.2 892.4 H1272.6000000000001 Q1279.6000000000001 892.4 1279.6000000000001 899.4 V962.2 Z" fill="#82b1fb"/>
<path d="M1232.2 1058.1 V961.2 Q1232.2 954.2 1239.2 954.2 H1272.6000000000001 Q1279.6000000000001 954.2 1279.6000000000001 961.2 V1058.1 Z" fill="#7bf7b1"/>
<path d="M1232.2 1202 V1057.1 Q1232.2 1050.1 1239.2 1050.1 H1272.6000000000001 Q1279.6000000000001 1050.1 1279.6000000000001 1057.1 V1202 Z" fill="#f081a3"/>
<path d="M1328.1 953.7 V920.4 Q1328.1 913.4 1335.1 913.4 H1368.5 Q1375.5 913.4 1375.5 920.4 V953.7 Z" fill="#82b1fb"/>
<path d="M1328.1 1032.6 V952.7 Q1328.1 945.7 1335.1 945.7 H1368.5 Q1375.5 945.7 1375.5 952.7 V1032.6 Z" fill="#7bf7b1"/>
<path d="M1328.1 1200.5 V1031.6 Q1328.1 1024.6 1335.1 1024.6 H1368.5 Q1375.5 1024.6 1375.5 1031.6 V1200.5 Z" fill="#f081a3"/>
<path d="M1423.7 979.2 V920.4 Q1423.7 913.4 1430.7 913.4 H1464.1000000000001 Q1471.1000000000001 913.4 1471.1000000000001 920.4 V979.2 Z" fill="#82b1fb"/>
<path d="M1423.7 1021.7 V978.2 Q1423.7 971.2 1430.7 971.2 H1464.1000000000001 Q1471.1000000000001 971.2 1471.1000000000001 978.2 V1021.7 Z" fill="#7bf7b1"/>
<path d="M1423.7 1200.5 V1020.7 Q1423.7 1013.7 1430.7 1013.7 H1464.1000000000001 Q1471.1000000000001 1013.7 1471.1000000000001 1020.7 V1200.5 Z" fill="#f081a3"/>
<path d="M1519.6 947.2 V912 Q1519.6 905 1526.6 905 H1560.0 Q1567.0 905 1567.0 912 V947.2 Z" fill="#82b1fb"/>
<path d="M1519.6 958.1 V946.2 Q1519.6 939.2 1526.6 939.2 H1560.0 Q1567.0 939.2 1567.0 946.2 V958.1 Z" fill="#7bf7b1"/>
<path d="M1519.6 1202 V957.1 Q1519.6 950.1 1526.6 950.1 H1560.0 Q1567.0 950.1 1567.0 957.1 V1202 Z" fill="#f081a3"/>
<path d="M1619.2 953.7 V895.2 Q1619.2 888.2 1626.2 888.2 H1659.6000000000001 Q1666.6000000000001 888.2 1666.6000000000001 895.2 V953.7 Z" fill="#82b1fb"/>
<path d="M1619.2 999.1 V952.7 Q1619.2 945.7 1626.2 945.7 H1659.6000000000001 Q1666.6000000000001 945.7 1666.6000000000001 952.7 V999.1 Z" fill="#7bf7b1"/>
<path d="M1619.2 1200.5 V998.1 Q1619.2 991.1 1626.2 991.1 H1659.6000000000001 Q1666.6000000000001 991.1 1666.6000000000001 998.1 V1200.5 Z" fill="#f081a3"/>
<line x1="1038" y1="1202.6" x2="1667" y2="1202.6" stroke="#8c8c8c" stroke-width="1.6"/>
</svg>
<div class="t" style="left:995.5px;top:768.7px;font-size:20px;color:#707070;font-weight:400;">60</div>
<div class="t" style="left:995.5px;top:839.4px;font-size:20px;color:#707070;font-weight:400;">50</div>
<div class="t" style="left:995.5px;top:908.9px;font-size:20px;color:#707070;font-weight:400;">40</div>
<div class="t" style="left:996.0px;top:981.1px;font-size:20px;color:#707070;font-weight:400;">30</div>
<div class="t" style="left:995.5px;top:1050.0px;font-size:20px;color:#707070;font-weight:400;">20</div>
<div class="t" style="left:993.0px;top:1123.3px;font-size:20px;color:#707070;font-weight:400;">10</div>
<div class="t" style="left:1038.5px;top:1221.3px;font-size:19px;color:#707070;font-weight:400;">Jun 4</div>
<div class="t" style="left:1134px;top:1221.3px;font-size:19px;color:#707070;font-weight:400;">Jun 5</div>
<div class="t" style="left:1229.5px;top:1221.3px;font-size:19px;color:#707070;font-weight:400;">Jun 6</div>
<div class="t" style="left:1325px;top:1221.3px;font-size:19px;color:#707070;font-weight:400;">Jun 7</div>
<div class="t" style="left:1421px;top:1221.3px;font-size:19px;color:#707070;font-weight:400;">Jun 8</div>
<div class="t" style="left:1516.5px;top:1221.3px;font-size:19px;color:#707070;font-weight:400;">Jun 9</div>
<div class="t" style="left:1616.5px;top:1221.3px;font-size:19px;color:#707070;font-weight:400;">Jun 10</div>
<div class="abs" style="left:1382.5px;top:763.5px;width:235px;height:147.5px;background:#fff;border:1px solid #e8e8e8;border-radius:6px;box-shadow:0 2px 6px rgba(0,0,0,0.07)"></div>
<div class="t" style="left:1395.5px;top:778.0px;font-size:19px;color:#707070;font-weight:400;">Jun 7</div>
<div class="abs" style="left:1395.5px;top:810.5999999999999px;width:11.4px;height:11.4px;border-radius:50%;background:#5b91f0"></div>
<div class="t" style="left:1413.0px;top:806.8px;font-size:19px;color:#1c1746;font-weight:400;">Email Orders <b style="color:#130d3d">41</b></div>
<div class="abs" style="left:1395.5px;top:844.4999999999999px;width:11.4px;height:11.4px;border-radius:50%;background:#35c08a"></div>
<div class="t" style="left:1413.0px;top:840.6999999999999px;font-size:19px;color:#1c1746;font-weight:400;letter-spacing:0.33px">Whatsapp Orders <b style="color:#130d3d">36</b></div>
<div class="abs" style="left:1395.5px;top:878.3999999999999px;width:11.4px;height:11.4px;border-radius:50%;background:#c9486e"></div>
<div class="t" style="left:1413.0px;top:874.5999999999999px;font-size:19px;color:#1c1746;font-weight:400;letter-spacing:0.33px">Instagram Orders<b style="color:#130d3d">25</b></div>
<!-- /charts -->
<!-- header -->
<div class="t" style="left:112px;top:23px;font-size:27px;font-weight:700;color:#130c3e">Revenue Report</div>
<div class="btn" style="left:1365px;top:14px;width:332px;height:42px;border-radius:6px"></div>
<svg class="ico" style="left:1377px;top:21px" width="28" height="26" viewBox="0 0 28 26"><circle cx="11" cy="11" r="8.6" fill="none" stroke="#707070" stroke-width="2.2"/><path d="M17.3 17.3 L24.5 24" stroke="#707070" stroke-width="2.4" stroke-linecap="round"/></svg>
<div class="t" style="left:1413px;top:26px;font-size:20px;letter-spacing:-0.4px;color:#1d1846">Search</div>
<svg class="ico" style="left:1718px;top:17px" width="40" height="38" viewBox="0 0 40 38">
 <defs><linearGradient id="sg" x1="0" y1="0" x2="0" y2="1"><stop offset="0" stop-color="#4a0c9c"/><stop offset="1" stop-color="#2a06ee"/></linearGradient>
 <linearGradient id="sg2" x1="0" y1="0" x2="0" y2="1"><stop offset="0" stop-color="#8a66d0"/><stop offset="1" stop-color="#7a66f2"/></linearGradient></defs>
 <path d="M16 10.9 C19.26 18.32 19.06 18.11 26.20 21.50 C19.06 24.89 19.26 24.68 16.00 32.10 C12.74 24.68 12.94 24.89 5.80 21.50 C12.94 18.11 12.74 18.32 16.00 10.90Z" fill="url(#sg)" stroke="url(#sg)" stroke-width="1.6" stroke-linejoin="round"/>
 <path d="M27.6 3.6000000000000005 C29.46 7.66 29.34 7.54 33.40 9.40 C29.34 11.26 29.46 11.14 27.60 15.20 C25.74 11.14 25.86 11.26 21.80 9.40 C25.86 7.54 25.74 7.66 27.60 3.60Z" fill="url(#sg2)" stroke="url(#sg2)" stroke-width="1.1" stroke-linejoin="round"/>
</svg>

<!-- tabs -->
<div class="t" style="left:112px;top:115px;font-size:22px;color:#707070">Revenue &amp; Order</div>
<div class="t" style="left:337px;top:114.5px;font-size:22px;color:#1f34c3">Channels</div>
<div class="abs" style="left:337px;top:148.5px;width:94px;height:3.5px;border-radius:2px;background:#1a2fc2"></div>

<div class="btn" style="left:1126px;top:88px;width:303px;height:47px"></div>
<svg class="ico" style="left:1140px;top:100px" width="22" height="23" viewBox="0 0 22 23"><rect x="2" y="4" width="17.5" height="17" rx="3.5" fill="none" stroke="#707070" stroke-width="2"/><path d="M2 9.5H19.5M6.5 1.8V6M15 1.8V6" stroke="#707070" stroke-width="2" stroke-linecap="round"/><g fill="#707070"><rect x="5.5" y="12" width="2.2" height="2.2"/><rect x="9.6" y="12" width="2.2" height="2.2"/><rect x="13.7" y="12" width="2.2" height="2.2"/><rect x="5.5" y="16" width="2.2" height="2.2"/><rect x="9.6" y="16" width="2.2" height="2.2"/><rect x="13.7" y="16" width="2.2" height="2.2"/></g></svg>
<div class="t" style="left:1167px;top:102px;font-size:20px;color:#1d1846;letter-spacing:0.75px">04/06/2025&nbsp;&nbsp;-&nbsp;&nbsp;10/06/2025</div>

<div class="btn" style="left:1449px;top:88px;width:160px;height:47px"></div>
<div class="t" style="left:1463px;top:102px;font-size:19px;color:#1d1846">Last 7 days</div>
<svg class="ico" style="left:1574px;top:104.5px" width="20" height="14" viewBox="0 0 20 14"><path d="M2.5 3.5 L10 11 L17.5 3.5" fill="none" stroke="#707070" stroke-width="1.8" stroke-linecap="round" stroke-linejoin="round"/></svg>

<div class="btn" style="left:1630px;top:88px;width:128px;height:47px"></div>
<svg class="ico" style="left:1643px;top:100px" width="24" height="24" viewBox="0 0 24 24"><path d="M4.8 7.6 A8.2 8.2 0 1 0 11.6 3.9 L8.4 4.3" fill="none" stroke="#707070" stroke-width="2.1" stroke-linecap="round"/><path d="M10.6 1.3 L7.5 4.6 L11 7.5" fill="none" stroke="#707070" stroke-width="2.1" stroke-linecap="round" stroke-linejoin="round"/></svg>
<div class="t" style="left:1671px;top:102px;font-size:19px;color:#1d1846">Refresh</div>

<div class="corner" style="left:0;top:0;height:8px"></div>
<div class="corner" style="left:1792px;top:0;height:8px"></div>
<div class="corner" style="left:0;top:1232px;height:4px"></div>
<div class="corner" style="left:1792px;top:1232px;height:4px"></div>
</body></html>
